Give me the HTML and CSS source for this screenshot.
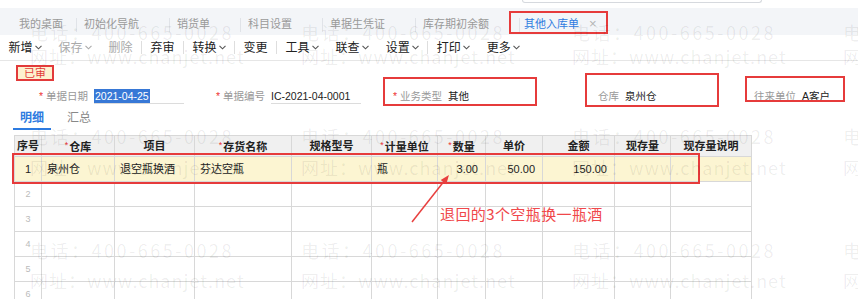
FILE: index.html
```html
<!DOCTYPE html>
<html lang="zh-CN">
<head>
    <meta charset="UTF-8">
    <title>其他入库单</title>
    <link rel="stylesheet" href="styles.css">
</head>
<body>
<div class="page">

    <div class="topbar"><div class="search"></div></div>

    <div class="tabbar">
        <div class="tab home">我的桌面</div>
        <div class="tab">初始化导航</div>
        <div class="tab">销货单</div>
        <div class="tab">科目设置</div>
        <div class="tab">单据生凭证</div>
        <div class="tab">库存期初余额</div>
        <div class="tab active">其他入库单<span class="close">×</span></div>
    </div>

    <div class="toolbar">
        <div class="tool">新增<svg width="7" height="5"><polyline points="0.5,0.8 3.5,3.8 6.5,0.8" fill="none" stroke="#555" stroke-width="1.1"/></svg></div>
        <div class="tool off">保存<svg width="7" height="5"><polyline points="0.5,0.8 3.5,3.8 6.5,0.8" fill="none" stroke="#aaa" stroke-width="1.1"/></svg></div>
        <div class="tool off">删除</div>
        <div class="sep"></div>
        <div class="tool">弃审</div>
        <div class="sep"></div>
        <div class="tool">转换<svg width="7" height="5"><polyline points="0.5,0.8 3.5,3.8 6.5,0.8" fill="none" stroke="#555" stroke-width="1.1"/></svg></div>
        <div class="sep"></div>
        <div class="tool">变更</div>
        <div class="sep"></div>
        <div class="tool">工具<svg width="7" height="5"><polyline points="0.5,0.8 3.5,3.8 6.5,0.8" fill="none" stroke="#555" stroke-width="1.1"/></svg></div>
        <div class="tool">联查<svg width="7" height="5"><polyline points="0.5,0.8 3.5,3.8 6.5,0.8" fill="none" stroke="#555" stroke-width="1.1"/></svg></div>
        <div class="tool">设置<svg width="7" height="5"><polyline points="0.5,0.8 3.5,3.8 6.5,0.8" fill="none" stroke="#555" stroke-width="1.1"/></svg></div>
        <div class="sep"></div>
        <div class="tool">打印<svg width="7" height="5"><polyline points="0.5,0.8 3.5,3.8 6.5,0.8" fill="none" stroke="#555" stroke-width="1.1"/></svg></div>
        <div class="tool">更多<svg width="7" height="5"><polyline points="0.5,0.8 3.5,3.8 6.5,0.8" fill="none" stroke="#555" stroke-width="1.1"/></svg></div>
    </div>

    <div class="status"><span class="badge">已审</span></div>

    <div class="form">
        <div class="field">
            <span class="label"><span class="req">*</span>单据日期</span>
            <span class="value line"><span class="picked">2021-04-25</span></span>
        </div>
        <div class="field">
            <span class="label"><span class="req">*</span>单据编号</span>
            <span class="value line">IC-2021-04-0001</span>
        </div>
        <div class="field">
            <span class="label"><span class="req">*</span>业务类型</span>
            <span class="value">其他</span>
        </div>
        <div class="field">
            <span class="label">仓库</span>
            <span class="value">泉州仓</span>
        </div>
        <div class="field">
            <span class="label">往来单位</span>
            <span class="value">A客户</span>
        </div>
    </div>

    <div class="subtabs">
        <span class="sub on">明细</span>
        <span class="sub">汇总</span>
    </div>

    <table class="grid">
        <colgroup>
            <col style="width:27px"><col style="width:73px"><col style="width:80px"><col style="width:97px">
            <col style="width:80px"><col style="width:66px"><col style="width:48px"><col style="width:57px">
            <col style="width:72px"><col style="width:56px"><col style="width:81px">
        </colgroup>
        <tr>
            <th>序号</th>
            <th><span class="star">*</span>仓库</th>
            <th>项目</th>
            <th><span class="star">*</span>存货名称</th>
            <th>规格型号</th>
            <th><span class="star">*</span>计量单位</th>
            <th><span class="star">*</span>数量</th>
            <th>单价</th>
            <th>金额</th>
            <th>现存量</th>
            <th>现存量说明</th>
        </tr>
        <tr class="current">
            <td class="no">1</td>
            <td>泉州仓</td>
            <td>退空瓶换酒</td>
            <td>芬达空瓶</td>
            <td></td>
            <td>瓶</td>
            <td class="num">3.00</td>
            <td class="num">50.00</td>
            <td class="num">150.00</td>
            <td></td>
            <td></td>
        </tr>
        <tr><td class="no dim">2</td><td></td><td></td><td></td><td></td><td></td><td></td><td></td><td></td><td></td><td></td></tr>
        <tr><td class="no dim">3</td><td></td><td></td><td></td><td></td><td></td><td></td><td></td><td></td><td></td><td></td></tr>
        <tr><td class="no dim">4</td><td></td><td></td><td></td><td></td><td></td><td></td><td></td><td></td><td></td><td></td></tr>
        <tr><td class="no dim">5</td><td></td><td></td><td></td><td></td><td></td><td></td><td></td><td></td><td></td><td></td></tr>
        <tr><td class="no dim">6</td><td></td><td></td><td></td><td></td><td></td><td></td><td></td><td></td><td></td><td></td></tr>
    </table>

    <!-- annotations drawn over the screenshot -->
    <div class="mark mark-tab"></div>
    <div class="mark mark-type"></div>
    <div class="mark mark-store"></div>
    <div class="mark mark-unit"></div>
    <div class="mark mark-row"></div>
    <svg class="arrow" width="50" height="60">
        <line x1="7" y1="54" x2="40" y2="12" stroke="#e8403f" stroke-width="1.5"/>
        <polygon points="44,7 41.2,16.2 35.7,11.9" fill="#e8403f"/>
    </svg>
    <div class="note">退回的3个空瓶换一瓶酒</div>

    <!-- watermark -->
    <div class="wm tel" style="top:22px"><span>电话：400-665-0028</span><span>电话：400-665-0028</span><span>电话：400-665-0028</span><span>电话：400-665-0028</span></div>
    <div class="wm web" style="top:46px"><span>网址：www.chanjet.net</span><span>网址：www.chanjet.net</span><span>网址：www.chanjet.net</span><span>网址：www.chanjet.net</span></div>
    <div class="wm tel" style="top:126px"><span>电话：400-665-0028</span><span>电话：400-665-0028</span><span>电话：400-665-0028</span><span>电话：400-665-0028</span></div>
    <div class="wm web" style="top:157px"><span>网址：www.chanjet.net</span><span>网址：www.chanjet.net</span><span>网址：www.chanjet.net</span><span>网址：www.chanjet.net</span></div>
    <div class="wm tel" style="top:240px"><span>电话：400-665-0028</span><span>电话：400-665-0028</span><span>电话：400-665-0028</span><span>电话：400-665-0028</span></div>
    <div class="wm web" style="top:270px"><span>网址：www.chanjet.net</span><span>网址：www.chanjet.net</span><span>网址：www.chanjet.net</span><span>网址：www.chanjet.net</span></div>

</div>
</body>
</html>
```

FILE: styles.css
```css
* {
    box-sizing: border-box;
}

body {
    margin: 0;
    background-color: #fff;
    font-family: "Liberation Sans", "Noto Sans CJK SC", sans-serif;
    font-size: 12px;
    color: #333;
}

.page {
    position: relative;
    width: 858px;
    height: 299px;
    overflow: hidden;
}

/* top strip with the bottom of the search box */
.topbar {
    height: 8px;
    padding-left: 522px;
}

.search {
    width: 240px;
    height: 3px;
    border: 1px solid #d6d9de;
    border-top: none;
    border-radius: 0 0 4px 4px;
}

/* open page tabs */
.tabbar {
    height: 27px;
    padding-top: 4px;
    display: flex;
    background-color: #f3f5f8;
    color: #9a9a9a;
    font-size: 11px;
    line-height: 14px;
}

.tab {
    position: relative;
    display: flex;
    align-items: center;
    padding: 0 30px 0 8px;
}

.tab.home {
    padding-left: 19px;
    padding-right: 13px;
}

.tab + .tab::before {
    content: "";
    position: absolute;
    left: 0;
    top: 6px;
    height: 14px;
    border-left: 1px solid #e0e3e8;
}

.tab.active {
    color: #2d7be0;
    padding: 0 10px 0 5px;
}

.tab.active::after {
    content: "";
    position: absolute;
    left: -7px;
    right: 0;
    bottom: 1px;
    height: 2px;
    background-color: #2d7be0;
}

.close {
    margin-left: 10px;
    color: #b5b5b5;
    font-size: 13px;
}

/* toolbar */
.toolbar {
    height: 26px;
    display: flex;
    align-items: center;
    border-bottom: 1px solid #e6e6e6;
}

.tool {
    display: flex;
    align-items: center;
    padding: 0 8.5px;
    line-height: 16px;
    color: #222;
}

.tool.off {
    color: #aaa;
}

.tool svg {
    margin-left: 2px;
}

.sep {
    width: 1px;
    height: 13px;
    background-color: #dedede;
}

/* audit state */
.status {
    height: 20px;
    padding: 4px 0 0 16px;
}

.badge {
    display: block;
    width: 38px;
    height: 16px;
    border: 2px solid #e23a3a;
    background-color: #fdf1cf;
    color: #e23a3a;
    font-size: 11px;
    line-height: 12px;
    text-align: center;
}

/* header fields */
.form {
    height: 30px;
    display: flex;
    align-items: center;
    padding-left: 36px;
    font-size: 10.5px;
    line-height: 14px;
}

.field {
    width: 177px;
    flex: none;
    display: flex;
    align-items: center;
}

.label {
    width: 52px;
    text-align: right;
    color: #999;
}

.req {
    color: #e33;
    margin-right: 3px;
}

.value {
    margin-left: 6px;
    width: 90px;
    color: #222;
}

.line {
    border-bottom: 1px solid #dcdcdc;
}

.picked {
    background-color: #3778d6;
    color: #fff;
    padding: 1px 1px;
}

/* detail / summary tabs */
.subtabs {
    height: 19px;
    display: flex;
    padding-left: 13px;
}

.sub {
    padding: 0 7px 2px;
    line-height: 15px;
    color: #888;
    border-bottom: 2px solid transparent;
}

.sub + .sub {
    margin-left: 9px;
}

.sub.on {
    color: #2d7be0;
    font-weight: bold;
    border-bottom-color: #2d7be0;
}

/* detail grid */
.grid {
    margin: 5px 0 0 14px;
    width: 737px;
    table-layout: fixed;
    border-collapse: collapse;
    font-size: 11px;
    line-height: 14px;
}

.grid th {
    height: 21px;
    padding: 0;
    background-color: #f0f0f0;
    border: 1px solid #d8d8d8;
    color: #222;
    font-weight: bold;
    text-align: center;
    white-space: nowrap;
}

.grid td {
    height: 25px;
    padding: 0 5px;
    border: 1px solid #d8d8d8;
    color: #222;
    white-space: nowrap;
}

.star {
    color: #e33;
    font-size: 9px;
    font-weight: normal;
    vertical-align: 3px;
    margin-right: 1px;
}

.current td {
    background-color: #fcf5d2;
}

.grid td.no {
    padding: 0;
    text-align: center;
}

.grid td.dim {
    color: #bbb;
    font-size: 9px;
}

.grid td.num {
    text-align: right;
    padding-right: 7px;
}

/* red annotation boxes */
.mark {
    position: absolute;
    border: 2px solid #e63b3b;
}

.mark-tab {
    left: 509px;
    top: 11px;
    width: 99px;
    height: 23px;
}

.mark-type {
    left: 383px;
    top: 77px;
    width: 154px;
    height: 29px;
}

.mark-store {
    left: 585px;
    top: 73px;
    width: 134px;
    height: 34px;
}

.mark-unit {
    left: 745px;
    top: 76px;
    width: 100px;
    height: 26px;
}

.mark-row {
    left: 12px;
    top: 153px;
    width: 688px;
    height: 31px;
}

.arrow {
    position: absolute;
    left: 405px;
    top: 168px;
}

.note {
    position: absolute;
    left: 440px;
    top: 204px;
    color: #f0474a;
    font-family: "Noto Sans CJK SC", sans-serif;
    font-size: 15px;
    line-height: 20px;
    letter-spacing: 0.4px;
}

/* watermark */
.wm {
    position: absolute;
    left: 30px;
    display: flex;
    color: rgba(0, 0, 0, 0.07);
    font-family: "Noto Sans CJK SC", sans-serif;
    font-size: 18px;
    line-height: 20px;
    white-space: nowrap;
    pointer-events: none;
}

.wm span {
    flex: none;
    width: 271px;
}

.wm.tel {
    letter-spacing: 2.5px;
}

.wm.web {
    letter-spacing: 1px;
}
```
